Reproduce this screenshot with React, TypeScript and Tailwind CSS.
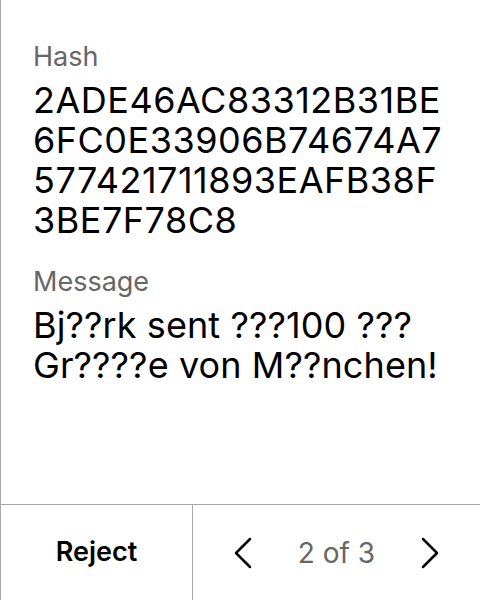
import React from "react";

export default function App() {
  return (
    <div
      className="w-[480px] h-[600px] flex flex-col bg-white border-l border-[#a8a8a8] text-black"
      style={{ fontFamily: "Inter, 'Liberation Sans', sans-serif" }}
    >
      <div className="flex-1 pl-[32px] pr-2 pt-[45px]">
        <div className="text-[27px] leading-[24px] text-[#666666]">Hash</div>
        <div className="text-[36px] leading-[40px] tracking-[0.5px] mt-[11px] whitespace-nowrap">
          2ADE46AC83312B31BE
          <br />
          6FC0E33906B74674A7
          <br />
          577421711893EAFB38F
          <br />
          3BE7F78C8
        </div>
        <div className="text-[27px] leading-[24px] text-[#666666] mt-[30px]">Message</div>
        <div className="text-[36px] leading-[40px] tracking-[0.1px] mt-[11px] whitespace-nowrap">
          Bj??rk sent ???100 ???
          <br />
          Gr????e von M??nchen!
        </div>
      </div>
      <div className="h-[96px] flex border-t border-[#a8a8a8]">
        <div className="w-[192px] flex items-center justify-center border-r border-[#a8a8a8] text-[27px] font-semibold pb-[1px]">
          Reject
        </div>
        <div className="flex-1 flex items-center justify-between px-[40px]">
          <svg width="20" height="36" viewBox="0 0 20 36" fill="none" stroke="black" strokeWidth="2.5" strokeLinecap="round" strokeLinejoin="round">
            <path d="M17 4 L3 18 L17 32" />
          </svg>
          <span className="text-[28px] text-[#666666]">2 of 3</span>
          <svg width="20" height="36" viewBox="0 0 20 36" fill="none" stroke="black" strokeWidth="2.5" strokeLinecap="round" strokeLinejoin="round">
            <path d="M3 4 L17 18 L3 32" />
          </svg>
        </div>
      </div>
    </div>
  );
}
